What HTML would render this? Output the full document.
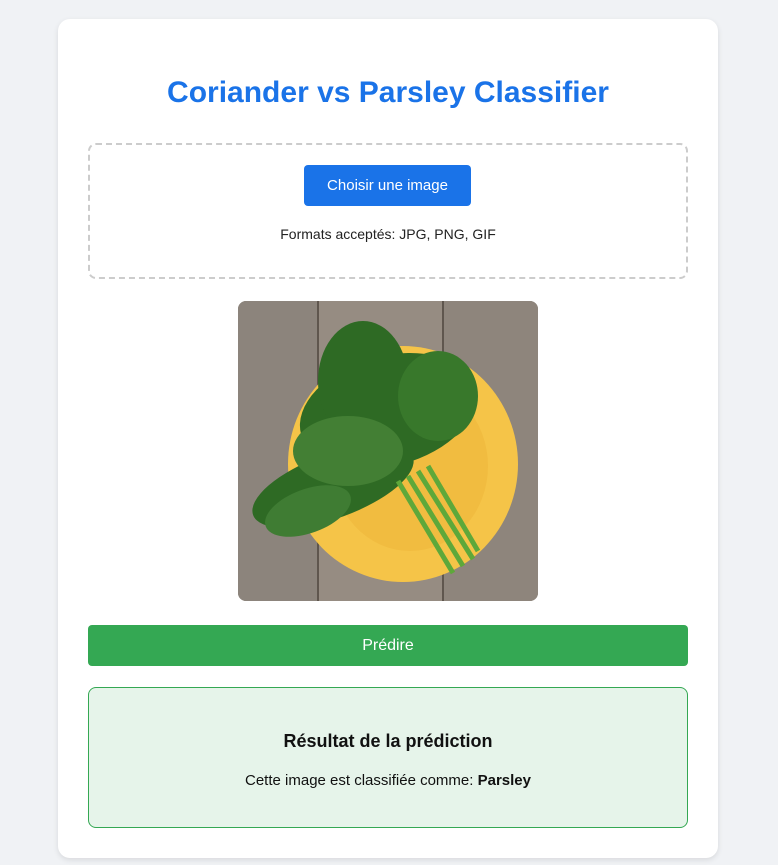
<!DOCTYPE html>
<html><head><meta charset="utf-8"><style>
*{box-sizing:border-box;margin:0;padding:0}
body{width:778px;height:865px;background:#f0f2f5;font-family:"Liberation Sans",sans-serif;position:relative;overflow:hidden}
.card{position:absolute;left:58px;top:19px;width:660px;height:839px;background:#fff;border-radius:12px;box-shadow:0 2px 6px rgba(0,0,0,.1)}
h1{position:absolute;left:0;right:0;top:57px;text-align:center;color:#1a73e8;font-size:30px;font-weight:bold}
.up{position:absolute;left:30px;top:124px;width:600px;height:136px;border:2px dashed #ccc;border-radius:8px}
.btn{position:absolute;left:214px;top:20px;width:167px;height:41px;background:#1a73e8;color:#fff;border-radius:4px;font-size:15px;text-align:center;line-height:41px}
.fmt{position:absolute;left:0;right:0;top:81px;text-align:center;font-size:14px;color:#222}
.img{position:absolute;left:180px;top:282px;width:300px;height:300px;border-radius:8px;overflow:hidden}
.pred{position:absolute;left:30px;top:606px;width:600px;height:41px;background:#34a853;color:#fff;border-radius:4px;text-align:center;line-height:41px;font-size:16px}
.res{position:absolute;left:30px;top:668px;width:600px;height:141px;background:#e6f4ea;border:1px solid #34a853;border-radius:8px;text-align:center}
.res h3{font-size:18px;margin-top:43px;color:#111}
.res p{font-size:15px;margin-top:20px;color:#111}
</style></head><body>
<div class="card">
<h1>Coriander vs Parsley Classifier</h1>
<div class="up"><div class="btn">Choisir une image</div><div class="fmt">Formats acceptés: JPG, PNG, GIF</div></div>
<div class="img"><svg width="300" height="300" viewBox="0 0 300 300">
<rect width="300" height="300" fill="#948a80"/>
<rect x="0" width="80" height="300" fill="#8c847c"/>
<rect x="80" width="125" height="300" fill="#968c82"/>
<rect x="205" width="95" height="300" fill="#8e857c"/>
<line x1="80" y1="0" x2="80" y2="300" stroke="#5f564e" stroke-width="2"/>
<line x1="205" y1="0" x2="205" y2="300" stroke="#5f564e" stroke-width="2"/>
<ellipse cx="165" cy="163" rx="115" ry="118" fill="#f5c448"/>
<ellipse cx="172" cy="165" rx="78" ry="85" fill="#f1bc40"/>
<g fill="#2e6a24">
<ellipse cx="150" cy="110" rx="90" ry="55" transform="rotate(-15 150 110)"/>
<ellipse cx="125" cy="80" rx="45" ry="60"/>
<ellipse cx="95" cy="185" rx="85" ry="32" transform="rotate(-20 95 185)"/>
<ellipse cx="200" cy="95" rx="40" ry="45" fill="#38782b"/>
<ellipse cx="110" cy="150" rx="55" ry="35" fill="#437f34"/>
<ellipse cx="70" cy="210" rx="45" ry="22" fill="#3f7c33" transform="rotate(-20 70 210)"/>
</g>
<path d="M170 175 L225 265 M180 170 L235 258 M160 180 L215 272 M190 165 L240 250" stroke="#5ea83a" stroke-width="5"/>
</svg></div>
<div class="pred">Prédire</div>
<div class="res"><h3>Résultat de la prédiction</h3><p>Cette image est classifiée comme: <b>Parsley</b></p></div>
</div>
</body></html>
